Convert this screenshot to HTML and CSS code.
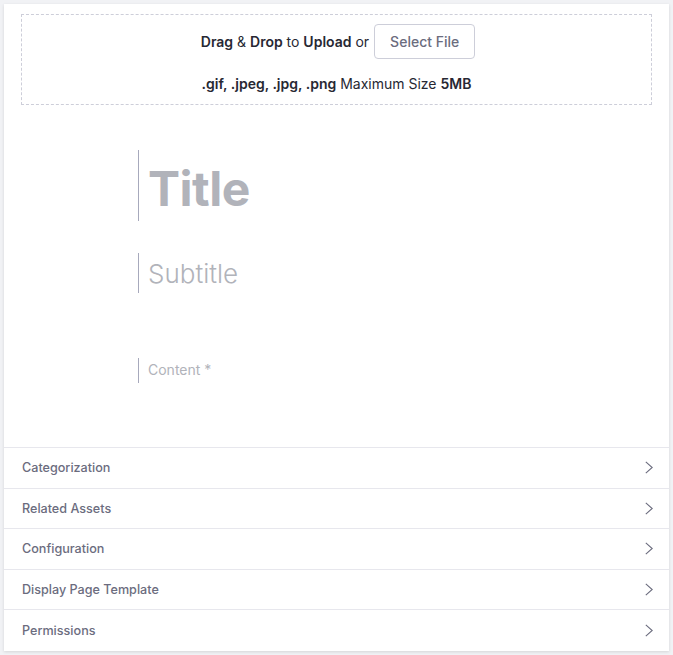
FILE: index.html
```html
<!DOCTYPE html>
<html>
<head>
<meta charset="utf-8">
<link rel="stylesheet" href="styles.css">
</head>
<body>
<div class="card">
  <div class="dropzone">
    <div class="dz-line">
      <span class="dz-text"><b>Drag</b> &amp; <b>Drop</b> to <b>Upload</b> or</span>
      <button class="btn">Select File</button>
    </div>
    <div class="dz-info"><b>.gif, .jpeg, .jpg, .png</b> Maximum Size <b>5MB</b></div>
  </div>
  <div class="editor">
    <div class="field field-title">Title</div>
    <div class="field field-subtitle">Subtitle</div>
    <div class="field field-content">Content *</div>
  </div>
  <div class="panels">
    <div class="panel"><span>Categorization</span><svg class="chev" viewBox="0 0 8 13"><path d="M0.8 0.8 L7.2 6.5 L0.8 12.2" /></svg></div>
    <div class="panel"><span>Related Assets</span><svg class="chev" viewBox="0 0 8 13"><path d="M0.8 0.8 L7.2 6.5 L0.8 12.2" /></svg></div>
    <div class="panel"><span>Configuration</span><svg class="chev" viewBox="0 0 8 13"><path d="M0.8 0.8 L7.2 6.5 L0.8 12.2" /></svg></div>
    <div class="panel"><span>Display Page Template</span><svg class="chev" viewBox="0 0 8 13"><path d="M0.8 0.8 L7.2 6.5 L0.8 12.2" /></svg></div>
    <div class="panel"><span>Permissions</span><svg class="chev" viewBox="0 0 8 13"><path d="M0.8 0.8 L7.2 6.5 L0.8 12.2" /></svg></div>
  </div>
</div>
</body>
</html>
```
FILE: styles.css
```css
* { box-sizing: border-box; }
html, body { margin: 0; }
body {
  background: #f1f2f5;
  padding: 4px;
  font-family: Inter, "Noto Sans", sans-serif;
  color: #272833;
}
.card {
  background: #fff;
  height: 647px;
  box-shadow: 0 1px 3px rgba(0,0,0,0.12);
  padding-top: 10px;
}
.dropzone {
  margin: 0 17px;
  height: 91px;
  border: 1px dashed #cdced9;
  padding-top: 9px;
  text-align: center;
  font-size: 14px;
}
.dz-line {
  display: flex;
  justify-content: center;
  align-items: center;
  gap: 5px;
  height: 35px;
  padding-left: 3px;
}
.dz-text b, .dz-info b { font-weight: 600; }
.btn {
  height: 35px;
  padding: 0 15px;
  border: 1px solid #cdced9;
  border-radius: 4px;
  background: #fff;
  color: #6b6c7e;
  font-family: inherit;
  font-size: 14px;
  font-weight: 500;
}
.dz-info {
  margin-top: 15px;
  line-height: 20px;
}
.editor {
  padding-left: 134px;
  padding-top: 45px;
  height: 342px;
}
.field {
  border-left: 1px solid #a7a9bc;
  padding-left: 9px;
  color: #b1b3ba;
}
.field-title {
  height: 71px;
  font-size: 48px;
  font-weight: 700;
  line-height: 78px;
  letter-spacing: -0.5px;
}
.field-subtitle {
  margin-top: 32px;
  height: 40px;
  font-size: 26px;
  line-height: 41px;
  font-weight: 300;
}
.field-content {
  margin-top: 65px;
  height: 25px;
  font-size: 14px;
  line-height: 24px;
}
.panel {
  display: flex;
  align-items: center;
  justify-content: space-between;
  height: 40.6px;
  border-top: 1px solid #e7e7ed;
  padding: 0 16px 0 18px;
  font-size: 12.6px;
  font-weight: 500;
  color: #6b6c7e;
}
.chev {
  width: 8px;
  height: 13px;
  fill: none;
  stroke: #6b6c7e;
  stroke-width: 1.1;
}
```
